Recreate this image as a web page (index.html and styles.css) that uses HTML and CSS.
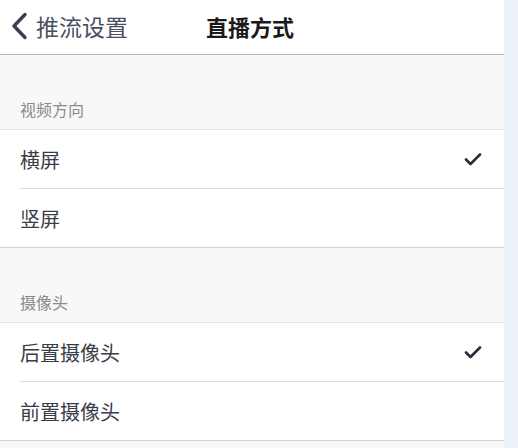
FILE: index.html
```html
<!DOCTYPE html>
<html lang="zh-CN">
<head>
<meta charset="utf-8">
<link rel="stylesheet" href="styles.css">
</head>
<body>
<div class="page">
  <main class="panel">
    <header class="nav">
      <a class="back">
        <svg class="chev" width="18" height="28" viewBox="0 0 18 28"><path d="M15 2.5 L4 14 L15 25.5" fill="none" stroke="#3a3f55" stroke-width="3.4" stroke-linecap="round" stroke-linejoin="round"/></svg>
        <span class="back-text">推流设置</span>
      </a>
      <h1 class="title">直播方式</h1>
    </header>
    <section class="group">
      <div class="group-label">视频方向</div>
      <ul class="list">
        <li class="item"><span>横屏</span><svg class="check" width="18" height="14" viewBox="0 0 18 14"><path d="M2 7.5 L6.5 12 L16 2.5" fill="none" stroke="#2a2d3a" stroke-width="2.6" stroke-linecap="round" stroke-linejoin="round"/></svg></li>
        <li class="item"><span>竖屏</span></li>
      </ul>
    </section>
    <section class="group">
      <div class="group-label">摄像头</div>
      <ul class="list">
        <li class="item"><span>后置摄像头</span><svg class="check" width="18" height="14" viewBox="0 0 18 14"><path d="M2 7.5 L6.5 12 L16 2.5" fill="none" stroke="#2a2d3a" stroke-width="2.6" stroke-linecap="round" stroke-linejoin="round"/></svg></li>
        <li class="item"><span>前置摄像头</span></li>
      </ul>
    </section>
  </main>
  <aside class="strip"></aside>
</div>
</body>
</html>
```
FILE: styles.css
```css
html, body {
  margin: 0;
  padding: 0;
  height: 100%;
}
body {
  font-family: "Noto Sans CJK SC", "Noto Sans", sans-serif;
  background: #f8f8f8;
}
.page {
  display: flex;
  min-height: 448px;
}
.panel {
  width: 504px;
  background: #f8f8f8;
}
.strip {
  flex: 1;
  background: #edf1f9;
}
.nav {
  height: 54px;
  border-bottom: 1px solid #b9b9b9;
  background: #fff;
  display: flex;
  align-items: center;
}
.back {
  display: flex;
  align-items: center;
  margin-left: 10px;
  margin-top: -2px;
}
.chev {
  display: block;
}
.back-text {
  margin-left: 8px;
  font-size: 23px;
  color: #4a4e5e;
  line-height: 1;
}
.title {
  margin: -2px 0 0 78px;
  font-size: 22px;
  font-weight: 700;
  color: #1a1a1a;
  line-height: 1;
  -webkit-text-stroke: 0;
}
.group-label {
  height: 74px;
  box-sizing: border-box;
  padding: 0 0 10px 20px;
  display: flex;
  align-items: flex-end;
  font-size: 16px;
  line-height: 20px;
  color: #8a8a8a;
}
.list {
  list-style: none;
  margin: 0;
  padding: 0 0 0 20px;
  background: #fff;
  border-top: 1px solid #e6e6e6;
  border-bottom: 1px solid #d4d4d4;
}
.item {
  height: 58px;
  display: flex;
  align-items: center;
  justify-content: space-between;
  padding-right: 22px;
  font-size: 20px;
  color: #3a3d48;
}
.item + .item {
  border-top: 1px solid #dcdcdc;
}
.check {
  display: block;
}
```
